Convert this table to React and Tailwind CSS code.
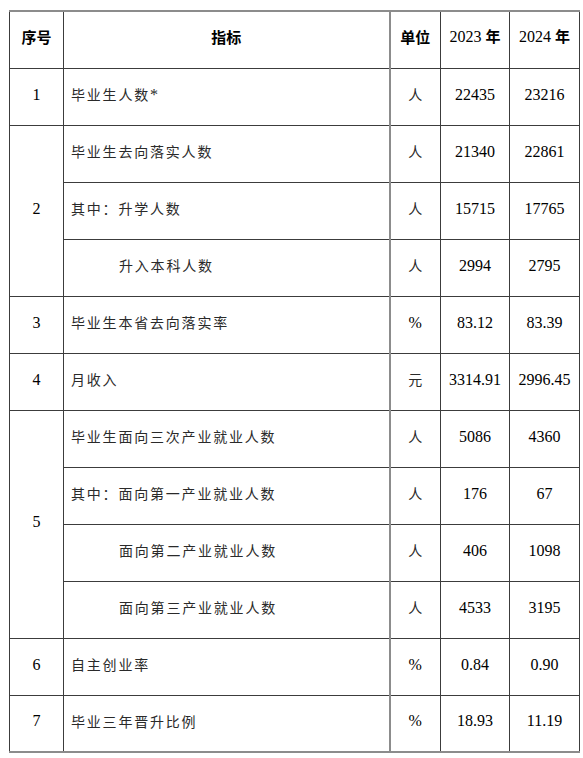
import React from "react";

const rows = [
  { no: "1", span: 1, label: "毕业生人数", star: true, unit: "人", y23: "22435", y24: "23216" },
  { no: "2", span: 3, label: "毕业生去向落实人数", unit: "人", y23: "21340", y24: "22861" },
  { label: "其中：升学人数", unit: "人", y23: "15715", y24: "17765" },
  { label: "升入本科人数", indent: true, unit: "人", y23: "2994", y24: "2795" },
  { no: "3", span: 1, label: "毕业生本省去向落实率", unit: "%", y23: "83.12", y24: "83.39" },
  { no: "4", span: 1, label: "月收入", unit: "元", y23: "3314.91", y24: "2996.45" },
  { no: "5", span: 4, label: "毕业生面向三次产业就业人数", unit: "人", y23: "5086", y24: "4360" },
  { label: "其中：面向第一产业就业人数", unit: "人", y23: "176", y24: "67" },
  { label: "面向第二产业就业人数", indent: true, unit: "人", y23: "406", y24: "1098" },
  { label: "面向第三产业就业人数", indent: true, unit: "人", y23: "4533", y24: "3195" },
  { no: "6", span: 1, label: "自主创业率", unit: "%", y23: "0.84", y24: "0.90" },
  { no: "7", span: 1, label: "毕业三年晋升比例", unit: "%", y23: "18.93", y24: "11.19" },
];

const serif = "font-['Liberation_Serif','Times_New_Roman',serif]";
const cjk = "font-['Noto_Sans_CJK_SC','Noto_Sans',sans-serif]";

const isUnitSerif = (u) => u === "%";

export default function App() {
  return (
    <div className="min-h-[758px] w-[583px] bg-white pl-[9px] pt-[10px]">
      <table className="w-[570px] table-fixed border-collapse border-y-2 border-y-[#8c8c8c] text-black">
        <colgroup>
          <col className="w-[54px]" />
          <col className="w-[326px]" />
          <col className="w-[51px]" />
          <col className="w-[69px]" />
          <col className="w-[70px]" />
        </colgroup>
        <thead>
          <tr className="h-[57px]">
            <th className={`border border-[#3c3c3c] pb-[6px] text-center text-[15px] font-bold ${cjk}`}>
              序号
            </th>
            <th className={`border-y border-l border-r-2 border-[#3c3c3c] border-r-[#8c8c8c] pb-[6px] text-center text-[15px] font-bold ${cjk}`}>
              指标
            </th>
            <th className={`border border-[#3c3c3c] pb-[6px] text-center text-[15px] font-bold ${cjk}`}>
              单位
            </th>
            <th className="border border-[#3c3c3c] pb-[6px] text-center font-normal">
              <span className={`${serif} text-[16px]`}>2023 </span>
              <span className={`${cjk} text-[15px] font-bold`}>年</span>
            </th>
            <th className="border border-[#3c3c3c] pb-[6px] text-center font-normal">
              <span className={`${serif} text-[16px]`}>2024 </span>
              <span className={`${cjk} text-[15px] font-bold`}>年</span>
            </th>
          </tr>
        </thead>
        <tbody>
          {rows.map((r, i) => (
            <tr key={i} className="h-[57px]">
              {r.no && (
                <td
                  rowSpan={r.span}
                  className={`border border-[#3c3c3c] pb-[4px] text-center text-[16px] ${serif}`}
                >
                  {r.no}
                </td>
              )}
              <td
                className={`border-y border-l border-r-2 border-[#3c3c3c] border-r-[#8c8c8c] pb-[4px] text-left text-[14px] tracking-[1.8px] text-[#2a2a2a] ${cjk} ${
                  r.indent ? "pl-[55px]" : "pl-[7px]"
                }`}
              >
                {r.label}
                {r.star && <span className={`${serif} text-[16px] tracking-normal`}>*</span>}
              </td>
              <td
                className={`border border-[#3c3c3c] pb-[4px] text-center ${
                  isUnitSerif(r.unit) ? `${serif} text-[16px]` : `${cjk} text-[14px] text-[#2a2a2a]`
                }`}
              >
                {r.unit}
              </td>
              <td className={`border border-[#3c3c3c] pb-[4px] text-center text-[16px] ${serif}`}>
                {r.y23}
              </td>
              <td className={`border border-[#3c3c3c] pb-[4px] text-center text-[16px] ${serif}`}>
                {r.y24}
              </td>
            </tr>
          ))}
        </tbody>
      </table>
    </div>
  );
}
